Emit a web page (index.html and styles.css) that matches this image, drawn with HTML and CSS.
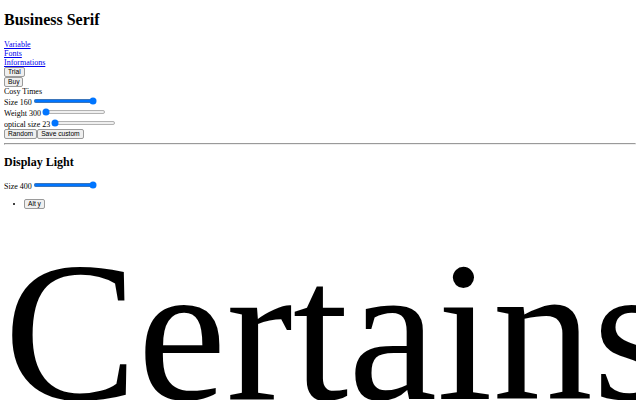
FILE: index.html
```html
<!DOCTYPE html>
<html>
<head>
<meta charset="utf-8">
<title>Business Serif</title>
<link rel="stylesheet" href="styles.css">
</head>
<body class="page">
<h1 class="title">Business Serif</h1>
<nav class="links">
  <div><a href="#">Variable</a></div>
  <div><a href="#">Fonts</a></div>
  <div><a href="#">Informations</a></div>
</nav>
<div><button>Trial</button></div>
<div><button>Buy</button></div>
<div class="tester">
  <div>Cosy Times</div>
  <div><label>Size 160</label><input type="range" min="8" max="160" value="160"></div>
  <div><label>Weight 300</label><input type="range" min="300" max="900" value="300"></div>
  <div><label>optical size 23</label><input type="range" min="23" max="200" value="23"></div>
  <div><button>Random</button><button>Save custom</button></div>
</div>
<hr>
<h2>Display Light</h2>
<div><label>Size 400</label><input type="range" min="8" max="400" value="400"></div>
<ul>
  <li><button>Alt y</button></li>
</ul>
<div class="specimen">Certains</div>
</body>
</html>
```
FILE: styles.css
```css
html {
  overflow: hidden;
}
.page {
  zoom: 0.5;
  font-family: "Liberation Serif", "Times New Roman", serif;
}
.title {
  margin-top: 14px;
}
.page button {
  font-family: "Liberation Sans", Arial, sans-serif;
  font-size: 13.33px;
  color: #000;
  padding: 1px 6px;
  background: #efefef;
  border: 1px solid #9a9a9a;
  border-radius: 4px;
}
.specimen {
  font-size: 400px;
  white-space: nowrap;
}
```
